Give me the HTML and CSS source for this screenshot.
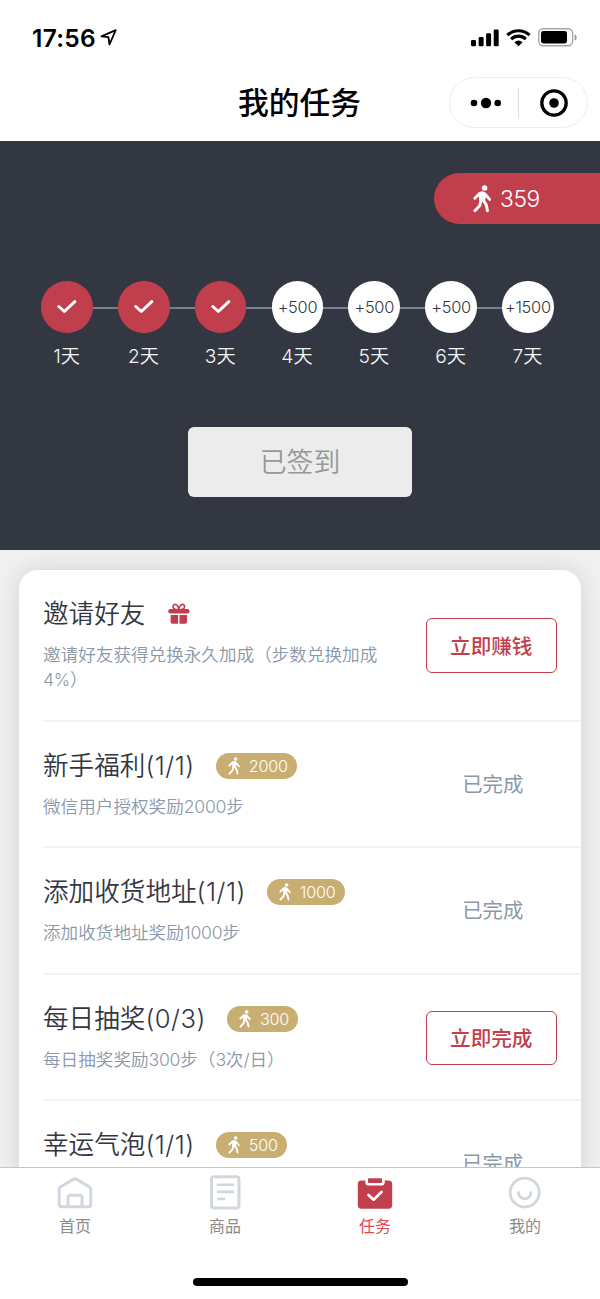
FILE: index.html
```html
<!DOCTYPE html>
<html lang="zh-CN">
<head>
<meta charset="utf-8">
<title>我的任务</title>
<link rel="stylesheet" href="styles.css">
</head>
<body>
<svg class="defs" width="0" height="0" aria-hidden="true">
  <symbol id="walker" viewBox="0 0 18 28">
    <circle cx="11.6" cy="3" r="2.8" fill="currentColor"/>
    <path d="M5.8 7.9 Q9 5.6 11.6 7.6 L12.6 11.4 L11.2 16.3 L6.8 16 Z" fill="currentColor" stroke="currentColor" stroke-width="1" stroke-linejoin="round"/>
    <path d="M6.3 8.8 L1.8 13.2 M11.8 8.8 L16.6 14.4 M8 15.5 L6.7 20.7 L1.9 25.7 M10.6 15.5 L13.4 20.2 L14.4 25.8" fill="none" stroke="currentColor" stroke-width="2.9" stroke-linecap="round" stroke-linejoin="round"/>
  </symbol>
  <symbol id="tick" viewBox="0 0 20 14">
    <path d="M1.8 6.5 L7.3 11.5 L17.8 1.7" fill="none" stroke="#fff" stroke-width="3" stroke-linecap="round" stroke-linejoin="round"/>
  </symbol>
</svg>
<div class="phone">
  <header class="header">
    <div class="status">
      <div class="clock"><span class="time">17:56</span>
        <svg class="location" width="17" height="17" viewBox="0 0 17 17"><path d="M15.7 1.2 L1.5 7.3 L8.4 8.1 L9.5 15.5 Z" fill="none" stroke="#000" stroke-width="1.8" stroke-linejoin="round"/></svg>
      </div>
      <div class="signals">
        <svg width="28" height="18" viewBox="0 0 28 18"><rect x="0" y="11" width="5" height="6.3" rx="1.3"/><rect x="7.6" y="8" width="5" height="9.3" rx="1.3"/><rect x="15.1" y="4.2" width="5" height="13.1" rx="1.3"/><rect x="22.7" y="0.5" width="5" height="16.8" rx="1.3"/></svg>
        <svg width="25" height="18" viewBox="0 0 25 18"><path d="M1.4 6.2 A15.9 15.9 0 0 1 23.6 6.2 M5.1 10.1 A10.6 10.6 0 0 1 19.9 10.1" fill="none" stroke="#000" stroke-width="3.1"/><path d="M8.4 13.2 Q12.5 9.8 16.6 13.2 L12.5 17.3 Z"/></svg>
        <svg width="39" height="19" viewBox="0 0 39 19"><rect x="0.8" y="0.8" width="33.8" height="17" rx="4.5" fill="#fff" stroke="#a5a5a5" stroke-width="1.4"/><rect x="3" y="3.1" width="26" height="12.4" rx="2.4"/><path d="M36.6 6.3 Q38.7 7 38.7 9.4 Q38.7 11.8 36.6 12.5 Z" fill="#999"/></svg>
      </div>
    </div>
    <div class="navbar">
      <h1 class="page-title">我的任务</h1>
      <div class="capsule">
        <svg width="32" height="12" viewBox="0 0 32 12"><circle cx="4" cy="6" r="3.3"/><circle cx="16" cy="6" r="5.2"/><circle cx="27.7" cy="6" r="3.3"/></svg>
        <i class="capsule-line"></i>
        <svg width="30" height="30" viewBox="0 0 30 30"><circle cx="15" cy="15" r="12.2" fill="none" stroke="#000" stroke-width="3.3"/><circle cx="15" cy="15" r="4.8"/></svg>
      </div>
    </div>
  </header>

  <section class="hero">
    <div class="steps"><svg width="18" height="28"><use href="#walker"/></svg><span class="steps-count">359</span></div>
    <ol class="days">
      <li class="day"><span class="dot done"><svg width="20" height="14"><use href="#tick"/></svg></span><span class="day-name">1天</span></li>
      <li class="day"><span class="dot done"><svg width="20" height="14"><use href="#tick"/></svg></span><span class="day-name">2天</span></li>
      <li class="day"><span class="dot done"><svg width="20" height="14"><use href="#tick"/></svg></span><span class="day-name">3天</span></li>
      <li class="day"><span class="dot">+500</span><span class="day-name">4天</span></li>
      <li class="day"><span class="dot">+500</span><span class="day-name">5天</span></li>
      <li class="day"><span class="dot">+500</span><span class="day-name">6天</span></li>
      <li class="day"><span class="dot">+1500</span><span class="day-name">7天</span></li>
    </ol>
    <button class="sign">已签到</button>
  </section>

  <main class="content">
    <div class="card">
      <article class="task">
        <div class="info">
          <h2 class="task-title">邀请好友
            <svg class="gift" width="22" height="22" viewBox="0 0 22 22"><path d="M10.8 6.4 C9 6.6 5 6.6 5 3.7 C5 .3 9.7.2 10.8 6.2 C11.9.2 16.6.3 16.6 3.7 C16.6 6.6 12.6 6.6 10.8 6.4" fill="none" stroke="#c13f4c" stroke-width="1.6"/><rect x="0.3" y="6" width="21.2" height="4.6" rx="1.8" fill="#c13f4c"/><path d="M2.6 12 H10.1 V20.8 H4.4 Q2.6 20.8 2.6 19 Z M11.5 12 H19 V19 Q19 20.8 17.2 20.8 H11.5 Z" fill="#c13f4c"/></svg>
          </h2>
          <p class="desc">邀请好友获得兑换永久加成（步数兑换加成<span class="num">4%</span>）</p>
        </div>
        <button class="action">立即赚钱</button>
      </article>
      <article class="task">
        <div class="info">
          <h2 class="task-title">新手福利<span class="progress">(1/1)</span><span class="reward"><svg width="12" height="18"><use href="#walker"/></svg>2000</span></h2>
          <p class="desc">微信用户授权奖励<span class="num">2000</span>步</p>
        </div>
        <span class="finished">已完成</span>
      </article>
      <article class="task">
        <div class="info">
          <h2 class="task-title">添加收货地址<span class="progress">(1/1)</span><span class="reward"><svg width="12" height="18"><use href="#walker"/></svg>1000</span></h2>
          <p class="desc">添加收货地址奖励<span class="num">1000</span>步</p>
        </div>
        <span class="finished">已完成</span>
      </article>
      <article class="task">
        <div class="info">
          <h2 class="task-title">每日抽奖<span class="progress">(0/3)</span><span class="reward"><svg width="12" height="18"><use href="#walker"/></svg>300</span></h2>
          <p class="desc">每日抽奖奖励<span class="num">300</span>步（<span class="num">3</span>次/日）</p>
        </div>
        <button class="action">立即完成</button>
      </article>
      <article class="task">
        <div class="info">
          <h2 class="task-title">幸运气泡<span class="progress">(1/1)</span><span class="reward"><svg width="12" height="18"><use href="#walker"/></svg>500</span></h2>
        </div>
        <span class="finished">已完成</span>
      </article>
    </div>
  </main>

  <nav class="tabbar">
    <div class="tabs">
      <a class="tab"><svg width="38" height="36" viewBox="0 0 38 36"><path d="M3.2 14.5 Q3.2 12.8 4.5 11.9 L17.2 4.4 Q19 3.2 20.8 4.4 L33.5 11.9 Q34.8 12.8 34.8 14.5 V29.3 Q34.8 31.8 32.3 31.8 H5.7 Q3.2 31.8 3.2 29.3 Z M12 31.5 V22.8 Q12 20.2 14.6 20.2 H23.4 Q26 20.2 26 22.8 V31.5" fill="none" stroke="#d0d7df" stroke-width="3"/></svg>首页</a>
      <a class="tab"><svg width="38" height="36" viewBox="0 0 38 36"><rect x="5.5" y="1.8" width="27.5" height="31.3" rx="2.5" fill="none" stroke="#d0d7df" stroke-width="3"/><path d="M12 9.8 H27 M12 16.9 H27 M12 23.9 H18" fill="none" stroke="#d0d7df" stroke-width="2.6" stroke-linecap="round"/></svg>商品</a>
      <a class="tab current"><svg width="38" height="36" viewBox="0 0 38 36"><rect x="1.8" y="5.5" width="34.4" height="28.2" rx="3.6" fill="#c13f4c"/><path d="M9.3 4.4 H28.7 V7.2 Q28.7 10.6 25.3 10.6 H12.7 Q9.3 10.6 9.3 7.2 Z" fill="#fff"/><rect x="12" y="3.2" width="14" height="4.7" rx="1" fill="#c13f4c"/><path d="M12.5 20 L17.6 24.7 L25.5 17" fill="none" stroke="#fff" stroke-width="2.7" stroke-linecap="round" stroke-linejoin="round"/></svg>任务</a>
      <a class="tab"><svg width="38" height="36" viewBox="0 0 38 36"><circle cx="18.7" cy="17.6" r="14.5" fill="none" stroke="#d0d7df" stroke-width="2.8"/><path d="M12.5 17.7 A6.2 6.2 0 0 0 24.9 17.7" fill="none" stroke="#d0d7df" stroke-width="2.8" stroke-linecap="round"/></svg>我的</a>
    </div>
    <div class="home-indicator"></div>
  </nav>
</div>
</body>
</html>
```
FILE: styles.css
```css
* { box-sizing: border-box; }
body {
  margin: 0;
  background: #fff;
  color: #343741;
  font-family: Inter, "Noto Sans CJK SC", sans-serif;
  font-weight: 350;
}
.defs { display: block; height: 0; }
h1, h2, p, ol { margin: 0; padding: 0; }
svg { flex: none; }
button { font-family: inherit; padding: 0; }
.num { letter-spacing: -0.015em; }

.phone {
  width: 600px;
  height: 1299px;
  display: flex;
  flex-direction: column;
  overflow: hidden;
}

/* status bar and title */
.header { flex: none; height: 140.5px; color: #000; }
.status {
  height: 75px;
  padding: 0 23px 0 32px;
  display: flex;
  justify-content: space-between;
  align-items: center;
}
.clock { display: flex; align-items: center; gap: 4px; }
.time { font-size: 24.5px; font-weight: 600; letter-spacing: 0.3px; line-height: 30px; }
.signals { display: flex; align-items: center; gap: 7px; margin-right: 0.5px; }
.navbar {
  height: 55px;
  display: grid;
  grid-template-columns: 150px 299px 139px;
  align-items: center;
}
.page-title {
  grid-column: 2;
  padding-top: 1px;
  text-align: center;
  font-size: 30.8px;
  font-weight: 500;
  line-height: 44px;
}
.capsule {
  height: 51px;
  border: 1px solid #ededed;
  border-radius: 26px;
  padding: 0 18px 0 20px;
  display: flex;
  align-items: center;
  justify-content: space-between;
}
.capsule-line { width: 1px; height: 30px; background: #dcdcdc; margin-left: -4px; }

/* check-in */
.hero {
  flex: none;
  height: 409.5px;
  padding-top: 32.5px;
  background: #333741;
  display: flex;
  flex-direction: column;
  align-items: center;
}
.steps {
  align-self: flex-end;
  width: 166px;
  height: 51px;
  padding-left: 39px;
  border-radius: 26px 0 0 26px;
  background: #c13f4c;
  color: #fff;
  display: flex;
  align-items: center;
  gap: 9px;
}
.steps-count { font-size: 22.8px; font-weight: 300; letter-spacing: -0.4px; }
.days {
  list-style: none;
  width: 537.6px;
  margin: 57px 5px 0 0;
  display: grid;
  grid-template-columns: repeat(7, 1fr);
}
.day {
  display: flex;
  flex-direction: column;
  align-items: center;
  background: linear-gradient(#748294, #748294) 0 26px / 100% 2px no-repeat;
}
.day:first-child { background-position: 38px 26px; }
.day:last-child { background-size: 38px 2px; }
.dot {
  width: 51.6px;
  height: 51.6px;
  border-radius: 50%;
  background: #fff;
  color: #333741;
  font-size: 16.4px;
  letter-spacing: -0.25px;
  white-space: nowrap;
  display: flex;
  align-items: center;
  justify-content: center;
}
.dot.done { background: #c13f4c; }
.day-name { margin-top: 9.4px; color: #f4f5f6; font-size: 19.2px; line-height: 28px; margin-left: -1px; }
.sign {
  margin-top: 57px;
  width: 224px;
  height: 70.5px;
  border: 0;
  border-radius: 6px;
  background: #ececec;
  color: #979797;
  font-size: 26.8px;
  font-weight: 350;
  padding-bottom: 3px;
}

/* task list */
.content {
  flex: 1;
  min-height: 0;
  overflow: hidden;
  padding: 19.5px 19px 0;
  background: #f1f1f1;
}
.card {
  background: #fff;
  border-radius: 19px;
  padding-left: 24px;
  box-shadow: 0 0 26px rgba(0, 0, 0, 0.13);
}
.task {
  min-height: 126.5px;
  border-bottom: 2px solid #f3f3f3;
  padding: 26px 24px 26px 0;
  display: flex;
  align-items: center;
  justify-content: space-between;
}
.info { width: 340px; align-self: flex-start; }
.task-title {
  height: 36px;
  display: flex;
  align-items: center;
  font-size: 25.6px;
  font-weight: 350;
  line-height: 36px;
  white-space: nowrap;
}
.progress { letter-spacing: 0.5px; }
.gift { margin-left: 23px; }
.reward {
  margin-left: 21px;
  height: 26px;
  padding: 0 9px 0 12px;
  border-radius: 13px;
  background: #c9ae74;
  color: #fff;
  font-size: 16.2px;
  font-weight: 300;
  letter-spacing: -0.2px;
  line-height: 26px;
  display: flex;
  align-items: center;
  gap: 9px;
}
.desc { margin-top: 10px; color: #8b98a9; font-size: 17.6px; line-height: 25.5px; padding-bottom: 1px; }
.action {
  width: 131.5px;
  height: 54.5px;
  border: 1.6px solid #c13f4c;
  border-radius: 6px;
  background: #fff;
  color: #c13f4c;
  font-size: 20.6px;
  font-weight: 500;
  margin-top: 2px;
  padding-bottom: 2px;
}
.finished {
  width: 131.5px;
  padding: 0 0 2px 3px;
  text-align: center;
  color: #8b98a9;
  font-size: 20.4px;
  font-weight: 400;
}

/* tab bar */
.tabbar {
  flex: none;
  height: 132px;
  border-top: 1px solid #c4c4c4;
  background: #fff;
  display: flex;
  flex-direction: column;
  align-items: center;
  justify-content: space-between;
  padding-bottom: 13px;
}
.tabs { width: 600px; display: grid; grid-template-columns: repeat(4, 1fr); padding-top: 7px; }
.tab {
  display: flex;
  flex-direction: column;
  align-items: center;
  color: #8a8a8a;
  font-size: 16px;
  font-weight: 400;
  line-height: 24px;
  gap: 3px;
}
.tab.current { color: #e34854; }
.home-indicator { width: 215px; height: 8px; border-radius: 4px; background: #000; }
```
